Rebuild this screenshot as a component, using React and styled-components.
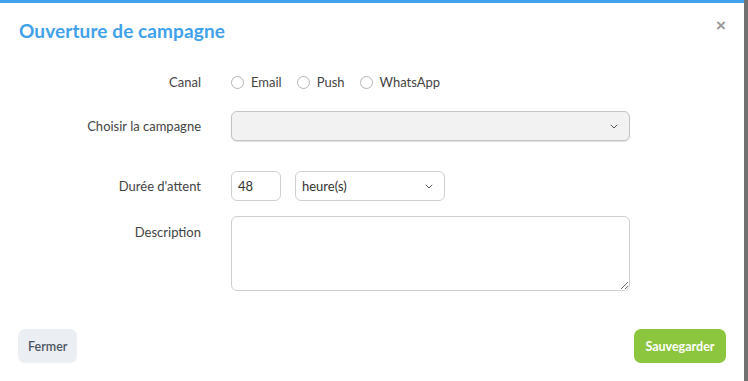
import React from "react";
import styled, { createGlobalStyle } from "styled-components";

const Global = createGlobalStyle`
  html, body { margin: 0; padding: 0; }
  body {
    background: #717171;
    font-family: Lato, "Noto Sans", sans-serif;
    color: #444;
  }
  * { box-sizing: border-box; }
`;

const Modal = styled.div`
  width: 744px;
  min-height: 381px;
  background: #fff;
  border-top: 3px solid #42a3ee;
  display: flex;
  flex-direction: column;
`;

const Header = styled.div`
  display: flex;
  align-items: center;
  justify-content: space-between;
  padding: 0 18px 0 19px;
  height: 55px;
`;

const Title = styled.h2`
  margin: 0;
  font-size: 19px;
  font-weight: 700;
  color: #3fa1ea;
  letter-spacing: 0.1px;
`;

const Close = styled.button`
  border: none;
  background: none;
  padding: 0;
  font-size: 17px;
  font-weight: 700;
  color: #9a9a9a;
  line-height: 1;
  cursor: pointer;
  margin-top: -10px;
`;

const Form = styled.div`
  display: grid;
  grid-template-columns: 182px 399px;
  column-gap: 30px;
  padding-left: 19px;
  margin-top: 14px;
`;

const Label = styled.div`
  text-align: right;
  font-size: 13px;
  color: #444;
  display: flex;
  justify-content: flex-end;
  align-items: ${(p) => (p.$top ? "flex-start" : "center")};
  padding-top: ${(p) => (p.$top ? "8px" : "0")};
  margin-top: ${(p) => p.$mt || 0}px;
  height: ${(p) => (p.$h ? p.$h + "px" : "auto")};
`;

const Field = styled.div`
  display: flex;
  align-items: center;
  margin-top: ${(p) => p.$mt || 0}px;
  height: ${(p) => (p.$h ? p.$h + "px" : "auto")};
`;

const RadioGroup = styled.div`
  display: flex;
  align-items: center;
  gap: 15px;
`;

const RadioItem = styled.label`
  display: flex;
  align-items: center;
  gap: 7px;
  font-size: 13px;
  color: #444;
`;

const Circle = styled.span`
  width: 13px;
  height: 13px;
  border-radius: 50%;
  border: 1px solid #b5b5b5;
  background: #fff;
  display: inline-block;
`;

const SelectBox = styled.div`
  width: ${(p) => p.$w}px;
  height: 30px;
  border: 1px solid ${(p) => (p.$gray ? "#c4c4c4" : "#cfcfcf")};
  border-radius: 6px;
  background: ${(p) => (p.$gray ? "#f2f2f2" : "#fff")};
  display: flex;
  align-items: center;
  justify-content: space-between;
  padding: 0 11px 0 6px;
  font-size: 13px;
  color: #333;
  box-shadow: ${(p) => (p.$gray ? "0 1px 1px rgba(0,0,0,0.12)" : "none")};
`;

const NumInput = styled.div`
  width: 50px;
  height: 30px;
  border: 1px solid #cfcfcf;
  border-radius: 6px;
  display: flex;
  align-items: center;
  padding-left: 6px;
  font-size: 13px;
  color: #333;
  margin-right: 14px;
`;

const TextArea = styled.textarea`
  width: 400px;
  height: 75px;
  border: 1px solid #cfcfcf;
  border-radius: 6px;
  font-family: inherit;
  resize: both;
  outline: none;
`;

const Footer = styled.div`
  display: flex;
  justify-content: space-between;
  align-items: center;
  padding: 0 18px;
  margin-top: 38px;
`;

const Button = styled.button`
  border: none;
  border-radius: 7px;
  height: 34px;
  padding: 0 ${(p) => (p.$primary ? "11.5px" : "10px")};
  font-family: inherit;
  font-size: 12.5px;
  font-weight: ${(p) => (p.$primary ? 700 : 600)};
  color: ${(p) => (p.$primary ? "#fff" : "#4b5563")};
  background: ${(p) => (p.$primary ? "#8cc63f" : "#ebeef2")};
  cursor: pointer;
`;

const Chevron = () => (
  <svg width="8" height="5" viewBox="0 0 8 5" fill="none">
    <path d="M0.8 0.8 L4 4 L7.2 0.8" stroke="#555" strokeWidth="1" />
  </svg>
);

export default function App() {
  return (
    <>
      <Global />
      <Modal>
        <Header>
          <Title>Ouverture de campagne</Title>
          <Close>×</Close>
        </Header>
        <Form>
          <Label $h={20}>Canal</Label>
          <Field $h={20}>
            <RadioGroup>
              <RadioItem><Circle />Email</RadioItem>
              <RadioItem><Circle />Push</RadioItem>
              <RadioItem><Circle />WhatsApp</RadioItem>
            </RadioGroup>
          </Field>

          <Label $mt={19} $h={30}>Choisir la campagne</Label>
          <Field $mt={19}>
            <SelectBox $w={400} $gray>
              <span />
              <Chevron />
            </SelectBox>
          </Field>

          <Label $mt={30} $h={30}>Durée d'attent</Label>
          <Field $mt={30}>
            <NumInput>48</NumInput>
            <SelectBox $w={150}>
              <span>heure(s)</span>
              <Chevron />
            </SelectBox>
          </Field>

          <Label $mt={15} $top>Description</Label>
          <Field $mt={15}>
            <TextArea />
          </Field>
        </Form>
        <Footer>
          <Button>Fermer</Button>
          <Button $primary>Sauvegarder</Button>
        </Footer>
      </Modal>
    </>
  );
}
